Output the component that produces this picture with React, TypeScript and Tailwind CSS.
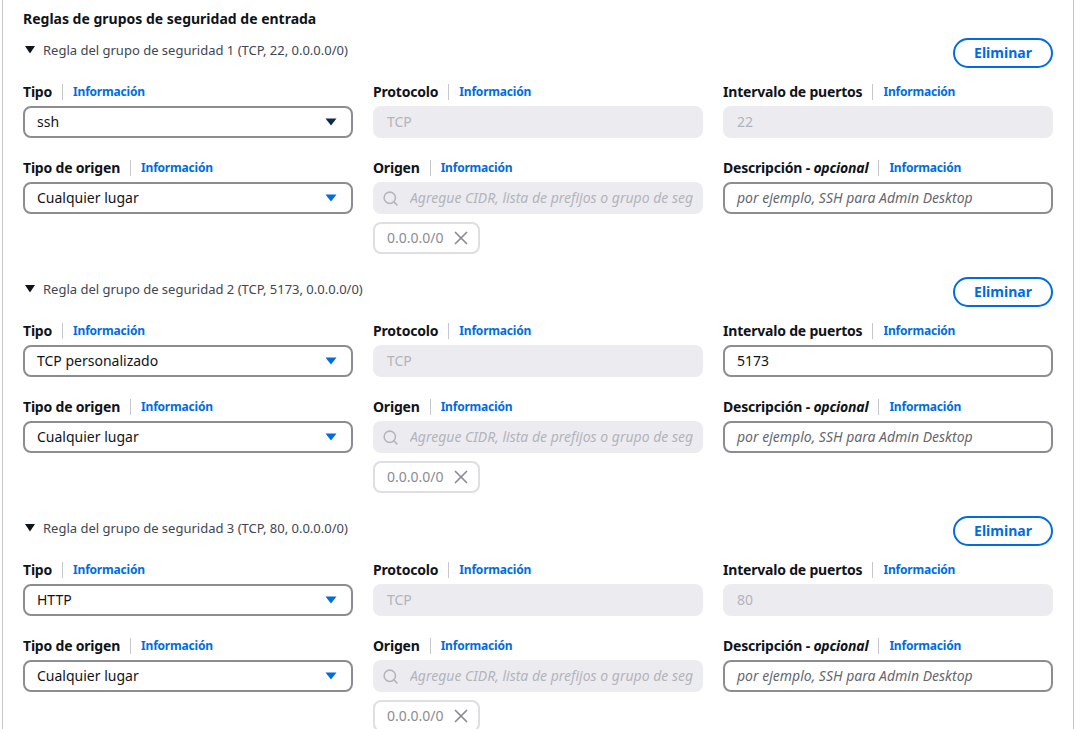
import { Search, X } from 'lucide-react';

type Rule = {
  title: string;
  tipo: string;
  tipoFocus?: boolean;
  puertos: string;
  puertosEditable?: boolean;
};

const rules: Rule[] = [
  { title: 'Regla del grupo de seguridad 1 (TCP, 22, 0.0.0.0/0)', tipo: 'ssh', tipoFocus: true, puertos: '22' },
  { title: 'Regla del grupo de seguridad 2 (TCP, 5173, 0.0.0.0/0)', tipo: 'TCP personalizado', puertos: '5173', puertosEditable: true },
  { title: 'Regla del grupo de seguridad 3 (TCP, 80, 0.0.0.0/0)', tipo: 'HTTP', puertos: '80' },
];

function Label({ children }: { children: React.ReactNode }) {
  return (
    <div className="flex items-center h-5">
      <span className="text-sm font-bold text-[#0f141a] leading-5 tracking-[-0.2px]">{children}</span>
      <span className="mx-[10px] w-px h-4 bg-[#c6c6cd]" />
      <span className="text-xs font-bold text-[#006ce0] tracking-[-0.2px]">Información</span>
    </div>
  );
}

function Caret({ dark }: { dark?: boolean }) {
  return (
    <svg width="12" height="8" viewBox="0 0 12 8">
      <path d="M0.5 0.5 L11.5 0.5 L6 7.5 Z" fill={dark ? '#0f2a52' : '#006ce0'} />
    </svg>
  );
}

function Select({ value, dark }: { value: string; dark?: boolean }) {
  return (
    <div className="h-8 border-2 border-[#8c8c94] rounded-lg flex items-center justify-between pl-3 pr-[14px]">
      <span className="text-sm text-[#0f141a]">{value}</span>
      <Caret dark={dark} />
    </div>
  );
}

function Disabled({ value }: { value: string }) {
  return (
    <div className="h-8 rounded-lg bg-[#ebebf0] flex items-center px-[14px]">
      <span className="text-sm text-[#b4b4bb]">{value}</span>
    </div>
  );
}

function TextInput({ value, placeholder }: { value?: string; placeholder?: string }) {
  return (
    <div className="h-8 border-2 border-[#8c8c94] rounded-lg flex items-center px-3">
      {value ? (
        <span className="text-sm text-[#0f141a]">{value}</span>
      ) : (
        <span className="text-sm italic text-[#656871]">{placeholder}</span>
      )}
    </div>
  );
}

function Field({ label, children }: { label: React.ReactNode; children: React.ReactNode }) {
  return (
    <div className="flex flex-col gap-1">
      <Label>{label}</Label>
      {children}
    </div>
  );
}

function RuleBlock({ rule }: { rule: Rule }) {
  return (
    <div className="flex flex-col">
      <div className="flex justify-between items-start h-[30px]">
        <div className="flex items-center h-5 mt-[3px] pl-[2px]">
          <svg width="10" height="8" viewBox="0 0 10 8" className="-mt-[3px]">
            <path d="M0 0 L10 0 L5 7.5 Z" fill="#0f141a" />
          </svg>
          <span className="ml-2 text-[13px] text-[#424650]">{rule.title}</span>
        </div>
        <button className="h-[30px] w-[100px] rounded-full border-2 border-[#006ce0] text-sm font-bold text-[#006ce0] bg-white">
          Eliminar
        </button>
      </div>
      <div className="grid grid-cols-3 gap-x-5 mt-[14px]">
        <Field label="Tipo">
          <Select value={rule.tipo} dark={rule.tipoFocus} />
        </Field>
        <Field label="Protocolo">
          <Disabled value="TCP" />
        </Field>
        <Field label="Intervalo de puertos">
          {rule.puertosEditable ? <TextInput value={rule.puertos} /> : <Disabled value={rule.puertos} />}
        </Field>
      </div>
      <div className="grid grid-cols-3 gap-x-5 mt-5">
        <Field label="Tipo de origen">
          <Select value="Cualquier lugar" />
        </Field>
        <div className="flex flex-col">
          <Field label="Origen">
            <div className="h-8 rounded-lg bg-[#ebebf0] flex items-center pl-[9px] pr-[10px]">
              <Search size={17} strokeWidth={2.2} color="#b4b4bb" />
              <span className="ml-[11px] text-sm italic text-[#b4b4bb] whitespace-nowrap overflow-hidden">
                Agregue CIDR, lista de prefijos o grupo de seg
              </span>
            </div>
          </Field>
          <div className="mt-2 h-8 w-[107px] border-2 border-[#dedee3] rounded-lg flex items-center pl-3 gap-[6px]">
            <span className="text-sm text-[#8c8c94]">0.0.0.0/0</span>
            <X size={22} strokeWidth={1.9} color="#8c8c94" />
          </div>
        </div>
        <Field
          label={
            <>
              Descripción - <i>opcional</i>
            </>
          }
        >
          <TextInput placeholder="por ejemplo, SSH para Admin Desktop" />
        </Field>
      </div>
    </div>
  );
}

export default function App() {
  return (
    <div className="w-[1078px] h-[729px] overflow-hidden bg-white" style={{ fontFamily: '"Noto Sans", sans-serif' }}>
      <div className="ml-[2px] w-[1072px] h-full border-x border-[#c6c6cd] px-5 pt-[9px]">
        <p className="text-sm font-bold text-[#0f141a] leading-5">Reglas de grupos de seguridad de entrada</p>
        <div className="flex flex-col gap-[23px] mt-[9px]">
          {rules.map((r) => (
            <RuleBlock key={r.title} rule={r} />
          ))}
        </div>
      </div>
    </div>
  );
}
